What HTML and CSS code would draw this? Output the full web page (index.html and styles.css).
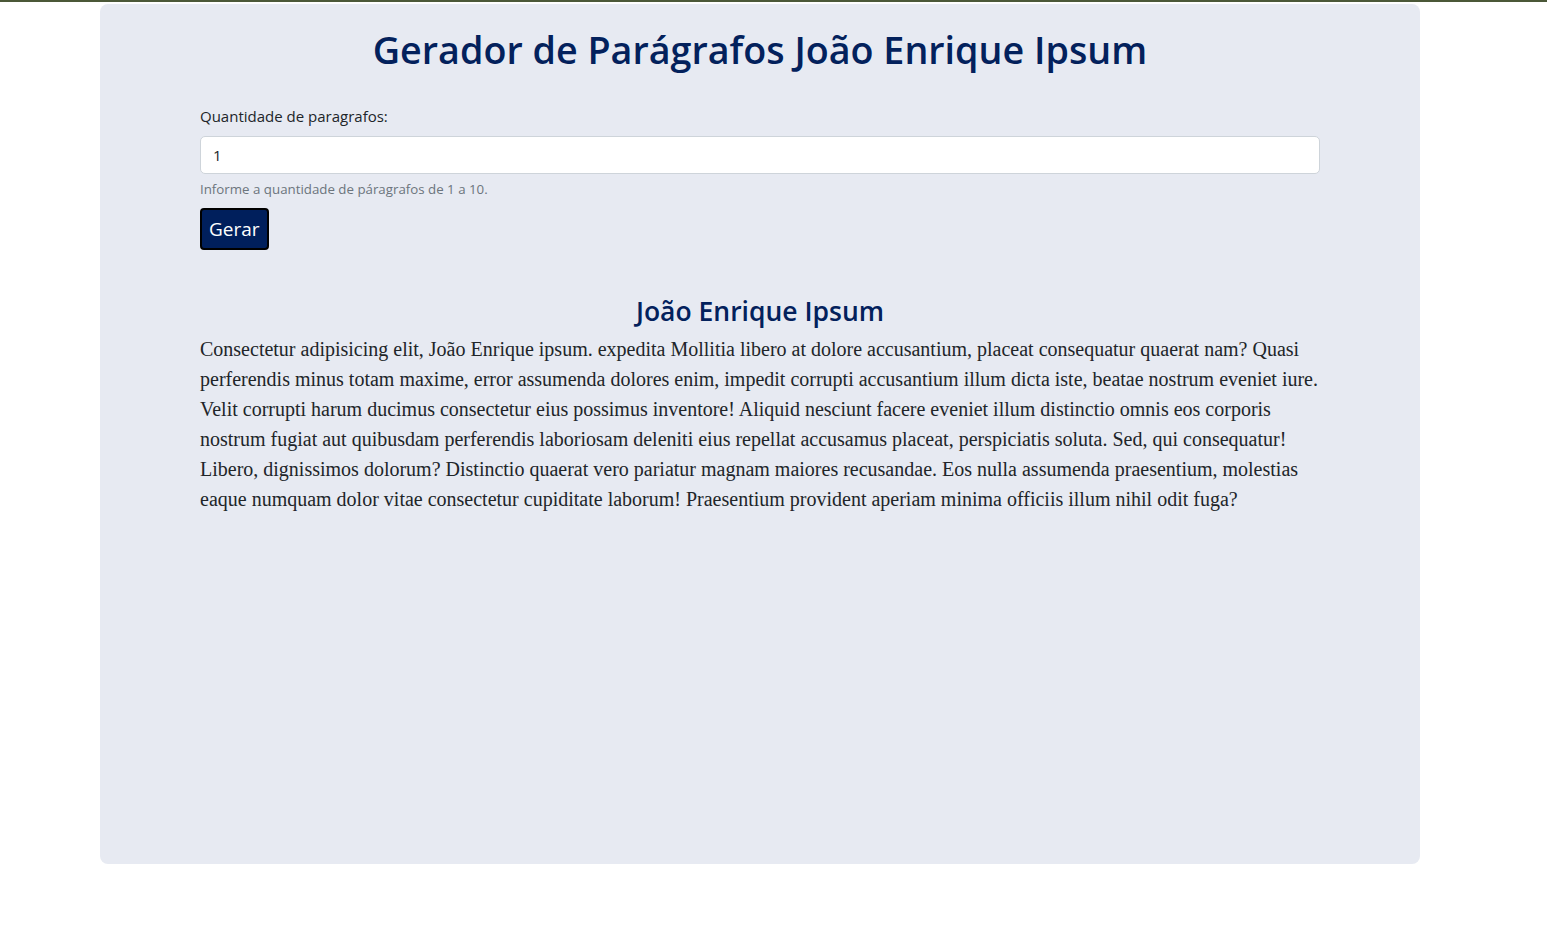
FILE: index.html
```html
<!DOCTYPE html>
<html lang="pt-BR">
<head>
<meta charset="utf-8">
<title>Gerador de Parágrafos João Enrique Ipsum</title>
<link rel="stylesheet" href="styles.css">
</head>
<body>
<div class="topbar"></div>
<div class="page">
  <main class="card">
    <h1 class="title">Gerador de Parágrafos João Enrique Ipsum</h1>
    <form class="form">
      <label class="label" for="qtd">Quantidade de paragrafos:</label>
      <input class="input" id="qtd" type="text" value="1">
      <div class="help">Informe a quantidade de páragrafos de 1 a 10.</div>
      <button class="btn" type="button">Gerar</button>
    </form>
    <section class="result">
      <h2 class="subtitle">João Enrique Ipsum</h2>
      <p class="para">Consectetur adipisicing elit, João Enrique ipsum. expedita Mollitia libero at dolore accusantium, placeat consequatur quaerat nam? Quasi perferendis minus totam maxime, error assumenda dolores enim, impedit corrupti accusantium illum dicta iste, beatae nostrum eveniet iure. Velit corrupti harum ducimus consectetur eius possimus inventore! Aliquid nesciunt facere eveniet illum distinctio omnis eos corporis nostrum fugiat aut quibusdam perferendis laboriosam deleniti eius repellat accusamus placeat, perspiciatis soluta. Sed, qui consequatur! Libero, dignissimos dolorum? Distinctio quaerat vero pariatur magnam maiores recusandae. Eos nulla assumenda praesentium, molestias eaque numquam dolor vitae consectetur cupiditate laborum! Praesentium provident aperiam minima officiis illum nihil odit fuga?</p>
    </section>
  </main>
</div>
</body>
</html>
```
FILE: styles.css
```css
* { box-sizing: border-box; }
html, body { margin: 0; padding: 0; background: #ffffff; }
body { font-family: "Open Sans", "Noto Sans", sans-serif; color: #212529; }
.topbar { height: 2px; background: #4b5838; }
.page { width: 1520px; padding-top: 2px; }
.card {
  width: 1320px;
  min-height: 860px;
  margin: 0 auto;
  background: #e7eaf2;
  border-radius: 8px;
  padding: 22px 100px 40px;
}
.title {
  margin: 0;
  text-align: center;
  font-size: 37.7px;
  line-height: 48px;
  font-weight: 600;
  color: #03215c;
}
.form { display: flex; flex-direction: column; align-items: flex-start; margin-top: 31px; }
.label { font-size: 15px; line-height: 22px; color: #212529; }
.input {
  margin-top: 9px;
  width: 100%;
  height: 38px;
  border: 1px solid #ced4da;
  border-radius: 5px;
  background: #fff;
  padding: 6px 12px;
  font-family: inherit;
  font-size: 15px;
  color: #212529;
}
.help { margin-top: 5px; font-size: 13.3px; line-height: 20px; color: #6c757d; }
.btn {
  margin-top: 9px;
  height: 42px;
  padding: 0 7px;
  background: #001f5c;
  color: #fff;
  border: 2px solid #000;
  border-radius: 4px;
  font-family: inherit;
  font-size: 19px;
}
.result { margin-top: 43px; }
.subtitle {
  margin: 0;
  text-align: center;
  font-size: 26.5px;
  line-height: 36px;
  font-weight: 600;
  color: #03215c;
}
.para {
  margin: 5px 0 0;
  font-family: "Liberation Serif", "Times New Roman", serif;
  font-size: 20px;
  line-height: 30px;
  color: #212529;
}
```
